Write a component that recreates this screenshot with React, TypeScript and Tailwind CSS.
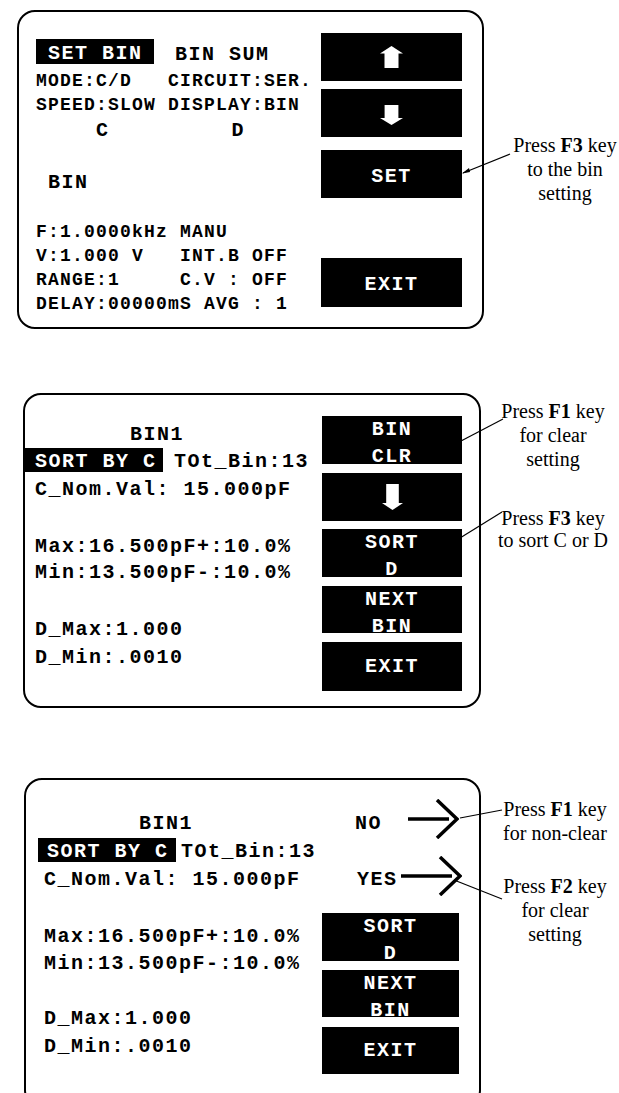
import React from 'react';

// Shared text styles for the LCD-like panel contents
const big = "font-['Liberation_Mono','Courier_New',monospace] font-bold text-[20px] tracking-[1.5px] whitespace-pre";
const small = "font-['Liberation_Mono','Courier_New',monospace] font-bold text-[18px] tracking-[1.2px] whitespace-pre";
const note = "font-['Liberation_Serif','Times_New_Roman',serif] text-[20px] text-black";

const UpArrow = () => (
  <svg width="23" height="22" viewBox="0 0 23 22">
    <polygon points="11.5,0 23,7.5 18.5,7.5 18.5,22 4.5,22 4.5,7.5 0,7.5" fill="white" />
  </svg>
);

const DownArrow = ({ w = 23, h = 20 }: { w?: number; h?: number }) => {
  const head = h - 7;
  return (
    <svg width={w} height={h} viewBox={`0 0 ${w} ${h}`}>
      <polygon
        points={`${w * 0.2},0 ${w * 0.8},0 ${w * 0.8},${head} ${w},${head} ${w / 2},${h} 0,${head} ${w * 0.2},${head}`}
        fill="white"
      />
    </svg>
  );
};

const PointArrow = ({ w }: { w: number }) => (
  <svg width={w} height="40" viewBox={`0 0 ${w} 40`}>
    <line x1="0" y1="20" x2={w - 10} y2="20" stroke="black" strokeWidth="3.5" />
    <polyline points={`${w - 22},1 ${w - 2},20 ${w - 22},39`} fill="none" stroke="black" strokeWidth="3.5" />
  </svg>
);

/** Single-line soft key */
const Key = ({ label, h = 48, className = '' }: { label: React.ReactNode; h?: number; className?: string }) => (
  <div className={`bg-black text-white flex items-center justify-center ${className}`} style={{ height: h }}>
    <span className={`${big} leading-[26px]`}>{label}</span>
  </div>
);

/** Two-line soft key */
const Key2 = ({ top, bottom, h = 48, className = '' }: { top: string; bottom: string; h?: number; className?: string }) => (
  <div className={`bg-black text-white flex flex-col items-center ${className}`} style={{ height: h }}>
    <span className={`${big} leading-[28px]`}>{top}</span>
    <span className={`${big} leading-[28px] -mt-[1px]`}>{bottom}</span>
  </div>
);

const Row = ({ children, className = '' }: { children: React.ReactNode; className?: string }) => (
  <div className={`${big} h-[26px] leading-[26px] ${className}`}>{children}</div>
);

const SmallRow = ({ children, className = '' }: { children: React.ReactNode; className?: string }) => (
  <div className={`${small} h-6 leading-6 ${className}`}>{children}</div>
);

const SortRow = ({ boxMl, boxPl, gap }: { boxMl: string; boxPl: string; gap: string }) => (
  <div className={`flex h-[24px] ${boxMl}`}>
    <div className={`bg-black text-white w-[138px] h-[24px] pt-[3px] ${boxPl}`}>
      <span className={`${big} leading-[21px] block`}>SORT BY C</span>
    </div>
    <span className={`${big} leading-[21px] pt-[3px] ${gap}`}>TOt_Bin:13</span>
  </div>
);

export default function App() {
  return (
    <div className="relative w-[619px] h-[1093px] overflow-hidden bg-white text-black">
      {/* Screen 1: bin summary */}
      <div className="flex ml-[17px] mt-[10px]">
        <div className="w-[467px] h-[319px] shrink-0 border-2 border-black rounded-[18px] flex">
          <div className="flex-1 flex flex-col pl-[17px]">
            <div className="flex mt-[27px] h-[25px]">
              <div className="bg-black text-white w-[118px] h-[25px] pl-[12px] pt-[4px]">
                <span className={`${big} leading-[21px] block`}>SET BIN</span>
              </div>
              <span className={`${big} leading-[21px] pt-[5px] ml-[21px]`}>BIN SUM</span>
            </div>
            <SmallRow className="mt-[5px]">{'MODE:C/D   CIRCUIT:SER.'}</SmallRow>
            <SmallRow>{'SPEED:SLOW DISPLAY:BIN'}</SmallRow>
            <Row className="mt-[1px] flex">
              <span className="ml-[60px]">C</span>
              <span className="ml-[122px]">D</span>
            </Row>
            <Row className="mt-[26px] pl-[12px]">BIN</Row>
            <SmallRow className="mt-[24px]">{'F:1.0000kHz MANU'}</SmallRow>
            <SmallRow>{'V:1.000 V   INT.B OFF'}</SmallRow>
            <SmallRow>{'RANGE:1     C.V : OFF'}</SmallRow>
            <SmallRow>{'DELAY:00000mS AVG : 1'}</SmallRow>
          </div>
          <div className="w-[141px] mr-[20px] pt-[21px] flex flex-col">
            <div className="bg-black h-[48px] flex items-center justify-center">
              <UpArrow />
            </div>
            <div className="bg-black h-[48px] mt-[8px] flex items-center justify-center pt-[3px]">
              <DownArrow />
            </div>
            <Key label="SET" className="mt-[13px] pt-[6px]" />
            <Key label="EXIT" h={49} className="mt-[60px] pt-[5px]" />
          </div>
        </div>
        <div className={`flex-1 pl-[27px] pt-[123px] text-center leading-6 ${note}`}>
          <div>Press <b>F3</b> key</div>
          <div>to the bin</div>
          <div>setting</div>
        </div>
      </div>

      {/* Screen 2: bin setting */}
      <div className="flex ml-[23px] mt-[64px]">
        <div className="w-[458px] h-[315px] shrink-0 border-2 border-black rounded-[18px] flex">
          <div className="flex-1 flex flex-col">
            <Row className="mt-[27px] pl-[105px]">BIN1</Row>
            <SortRow boxMl="ml-0" boxPl="pl-[10px]" gap="ml-[11px]" />
            <Row className="mt-[5px] pl-[10px]">C_Nom.Val: 15.000pF</Row>
            <Row className="mt-[31px] pl-[10px]">Max:16.500pF+:10.0%</Row>
            <Row className="pl-[10px]">Min:13.500pF-:10.0%</Row>
            <Row className="mt-[31px] pl-[10px]">D_Max:1.000</Row>
            <Row className="mt-[2px] pl-[10px]">D_Min:.0010</Row>
          </div>
          <div className="w-[140px] mr-[17px] pt-[21px] flex flex-col">
            <Key2 top="BIN" bottom="CLR" />
            <div className="bg-black h-[48px] mt-[9px] flex items-center justify-center">
              <DownArrow w={21} h={26} />
            </div>
            <Key2 top="SORT" bottom="D" className="mt-[8px]" />
            <Key2 top="NEXT" bottom="BIN" h={47} className="mt-[9px]" />
            <Key label="EXIT" h={49} className="mt-[9px]" />
          </div>
        </div>
        <div className={`flex-1 pl-[6px] pt-[6px] text-center ${note}`}>
          <div className="leading-6">
            <div>Press <b>F1</b> key</div>
            <div>for clear</div>
            <div>setting</div>
          </div>
          <div className="leading-[22px] mt-[36px]">
            <div>Press <b>F3</b> key</div>
            <div>to sort C or D</div>
          </div>
        </div>
      </div>

      {/* Screen 3: clear confirmation */}
      <div className="flex ml-[24px] mt-[70px]">
        <div className="w-[457px] h-[330px] shrink-0 border-2 border-black rounded-[18px] flex">
          <div className="flex-1 flex flex-col">
            <Row className="mt-[31px] pl-[113px]">BIN1</Row>
            <div className="mt-[1px]">
              <SortRow boxMl="ml-[12px]" boxPl="pl-[9px]" gap="ml-[5px]" />
            </div>
            <Row className="mt-[5px] pl-[18px]">C_Nom.Val: 15.000pF</Row>
            <Row className="mt-[31px] pl-[18px]">Max:16.500pF+:10.0%</Row>
            <Row className="mt-[1px] pl-[18px]">Min:13.500pF-:10.0%</Row>
            <Row className="mt-[29px] pl-[18px]">D_Max:1.000</Row>
            <Row className="mt-[2px] pl-[18px]">D_Min:.0010</Row>
          </div>
          <div className="w-[157px] pt-[19px] flex flex-col">
            <div className="flex h-[40px] items-start">
              <span className={`${big} leading-[26px] mt-[12px] ml-[33px]`}>NO</span>
              <div className="ml-[26px]">
                <PointArrow w={51} />
              </div>
            </div>
            <div className="flex h-[40px] mt-[17px] items-start">
              <span className={`${big} leading-[26px] mt-[11px] ml-[35px]`}>YES</span>
              <div className="ml-[3px]">
                <PointArrow w={61} />
              </div>
            </div>
            <Key2 top="SORT" bottom="D" className="mt-[17px] w-[137px]" />
            <Key2 top="NEXT" bottom="BIN" h={47} className="mt-[9px] w-[137px]" />
            <Key label="EXIT" h={47} className="mt-[10px] w-[137px]" />
          </div>
        </div>
        <div className={`flex-1 pl-[10px] pt-[19px] text-center leading-6 ${note}`}>
          <div>Press <b>F1</b> key</div>
          <div>for non-clear</div>
          <div className="mt-[29px]">Press <b>F2</b> key</div>
          <div>for clear</div>
          <div>setting</div>
        </div>
      </div>

      {/* Leader lines from the notes to the keys */}
      <svg className="absolute inset-0 pointer-events-none" width="619" height="1093" viewBox="0 0 619 1093">
        <line x1="463" y1="173" x2="510" y2="154" stroke="black" strokeWidth="1.2" />
        <polygon points="462,173.5 469,168 470,172" fill="black" />
        <line x1="461" y1="441" x2="503" y2="419" stroke="black" strokeWidth="1.2" />
        <line x1="460" y1="538" x2="502" y2="512" stroke="black" strokeWidth="1.2" />
        <line x1="460" y1="818" x2="502" y2="810" stroke="black" strokeWidth="1.2" />
        <line x1="454" y1="880" x2="502" y2="899" stroke="black" strokeWidth="1.2" />
      </svg>
    </div>
  );
}
